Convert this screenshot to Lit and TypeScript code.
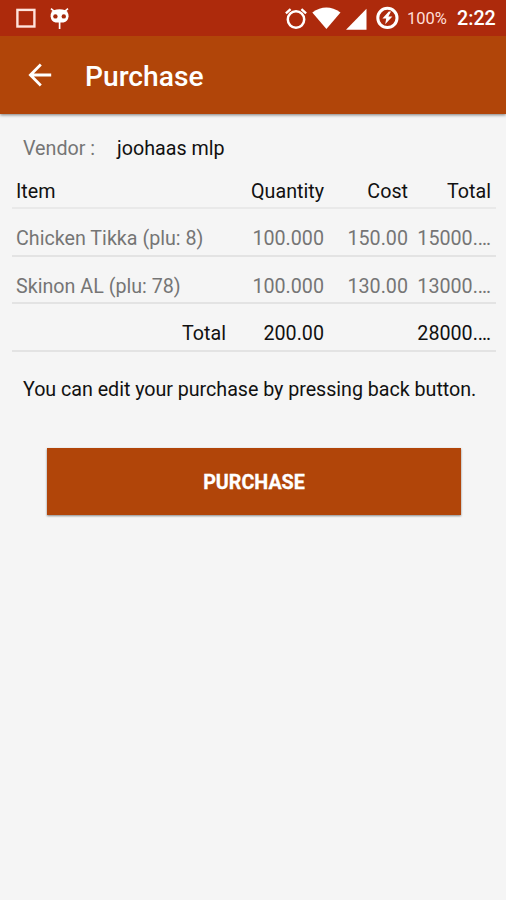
import { LitElement, html, css } from "lit";
import { customElement, property } from "lit/decorators.js";

interface Line {
  kind: "head" | "entry" | "sum";
  cells: [string, string, string, string];
}

const LINES: Line[] = [
  { kind: "head", cells: ["Item", "Quantity", "Cost", "Total"] },
  { kind: "entry", cells: ["Chicken Tikka (plu: 8)", "100.000", "150.00", "15000.…"] },
  { kind: "entry", cells: ["Skinon AL (plu: 78)", "100.000", "130.00", "13000.…"] },
  { kind: "sum", cells: ["Total", "200.00", "", "28000.…"] },
];

@customElement("status-bar")
export class StatusBar extends LitElement {
  static styles = css`
    :host {
      display: flex;
      align-items: center;
      height: 36px;
      box-sizing: border-box;
      padding: 0 11px 0 16px;
      background: #ad2a0c;
      color: #fff;
      font-family: Roboto, sans-serif;
    }
    svg { display: block; flex: none; }
    .cyan { margin-left: 13px; }
    .gap { flex: 1; }
    .wifi { margin-left: 5px; }
    .signal { margin-left: 5px; }
    .battery { margin-left: 9px; }
    .percent { margin-left: 8px; width: 39px; font-size: 16.5px; line-height: 36px; padding-top: 2px; color: #ffdfd8; white-space: nowrap; }
    .clock { margin-left: 11px; width: 38px; font-size: 19.7px; font-weight: 500; line-height: 36px; padding-top: 2px; white-space: nowrap; }
  `;

  render() {
    return html`
      <svg width="20" height="36" viewBox="0 0 20 36">
        <rect x="1.4" y="9.9" width="17" height="16.6" fill="none" stroke="#ffe3dc" stroke-width="2.4" />
      </svg>
      <svg class="cyan" width="22" height="36" viewBox="0 0 22 36">
        <path d="M2 8.6L5 11.2M19 8.6L16 11.2" stroke="#fff" stroke-width="1.6" />
        <path d="M4.6 10.2Q10.5 8.4 16.4 10.2Q19.6 12 19.6 16.2Q19 21.6 14.5 22.6H6.5Q2 21.6 1.6 16.2Q1.4 12 4.6 10.2Z" fill="#fff" />
        <circle cx="6.4" cy="16.4" r="2.2" fill="#a62a0c" />
        <circle cx="14.8" cy="16.4" r="2.2" fill="#a62a0c" />
        <path d="M10.6 22V29" stroke="#fff" stroke-width="1.7" />
      </svg>
      <span class="gap"></span>
      <svg width="22" height="36" viewBox="0 0 22 36">
        <circle cx="11" cy="19.5" r="8.2" fill="none" stroke="#fff" stroke-width="2.5" />
        <path d="M.9 13.4L5.6 9.2M21.1 13.4L16.4 9.2" stroke="#fff" stroke-width="2.4" />
      </svg>
      <svg class="wifi" width="29" height="36" viewBox="0 0 29 36">
        <path d="M.3 12.6Q14.3 2.4 28.5 12.6L14.4 29Z" fill="#fff" />
      </svg>
      <svg class="signal" width="21" height="36" viewBox="0 0 21 36">
        <path d="M20.5 8.8V29.8H0Z" fill="#fff" />
      </svg>
      <svg class="battery" width="23" height="36" viewBox="0 0 23 36">
        <circle cx="11.4" cy="17.9" r="9.6" fill="none" stroke="#fff" stroke-width="3" />
        <path d="M12.8 11.6L6.4 18.6H10.2L9.2 24.2L16.4 16.6H12.4L15 11.6Z" fill="#fff" />
      </svg>
      <span class="percent">100%</span>
      <span class="clock">2:22</span>
    `;
  }
}

@customElement("app-header")
export class AppHeader extends LitElement {
  @property() heading = "";

  static styles = css`
    :host {
      display: flex;
      align-items: center;
      height: 78px;
      box-sizing: border-box;
      padding-left: 28px;
      background: #b14509;
      box-shadow: 0 1px 3px rgba(0, 0, 0, 0.5);
      clip-path: inset(0 0 -6px 0);
      color: #fff;
      font-family: Roboto, sans-serif;
    }
    svg { display: block; flex: none; }
    .title { margin: 4px 0 0 33px; font-size: 28.2px; line-height: 34px; font-weight: 500; }
  `;

  render() {
    return html`
      <svg width="24" height="24" viewBox="0 0 24 24">
        <path d="M23.2 12H2.5M12.8 1.6L2.4 12L12.8 22.4" fill="none" stroke="#fff" stroke-width="2.8" />
      </svg>
      <span class="title">${this.heading}</span>
    `;
  }
}

@customElement("app-root")
export class AppRoot extends LitElement {
  static styles = css`
    :host {
      display: flex;
      flex-direction: column;
      height: 900px;
      background: #f5f5f5;
      color: #111;
      font-family: Roboto, sans-serif;
      font-size: 19.7px;
      line-height: 24px;
      white-space: nowrap;
    }
    .vendor { display: flex; margin: 23px 0 0 23px; }
    .label { width: 94px; color: #757575; }
    .table { margin: 8px 10px 0 12px; }
    .row {
      display: grid;
      grid-template-columns: 218px 98px 84px 83px;
      align-items: end;
      height: 47.67px;
      box-sizing: border-box;
      padding-bottom: 3.5px;
      border-bottom: 2px solid #e3e3e3;
    }
    .head { height: 40px; border-color: #e9e9e9; }
    .entry { color: #757575; }
    .cell { padding: 0 4px; text-align: right; }
    .head .cell:first-child, .entry .cell:first-child { text-align: left; }
    .note { margin: 26px 0 0 23px; letter-spacing: -0.035px; }
    .action {
      display: block;
      margin: 46px 45px 0 47px;
      height: 67px;
      border: 0;
      padding: 3px 0 0;
      background: #b14509;
      box-shadow: 0 1px 2px rgba(0, 0, 0, 0.45);
      color: #fff;
      font: 700 19.7px/24px Roboto, sans-serif;
      -webkit-text-stroke: 0.3px #fff;
    }
  `;

  render() {
    return html`
      <status-bar></status-bar>
      <app-header heading="Purchase"></app-header>
      <div class="vendor"><span class="label">Vendor :</span><span class="name">joohaas mlp</span></div>
      <div class="table">
        ${LINES.map(
          (line) => html`<div class="row ${line.kind}">
            ${line.cells.map((text) => html`<span class="cell">${text}</span>`)}
          </div>`
        )}
      </div>
      <div class="note">You can edit your purchase by pressing back button.</div>
      <button class="action">PURCHASE</button>
    `;
  }
}
